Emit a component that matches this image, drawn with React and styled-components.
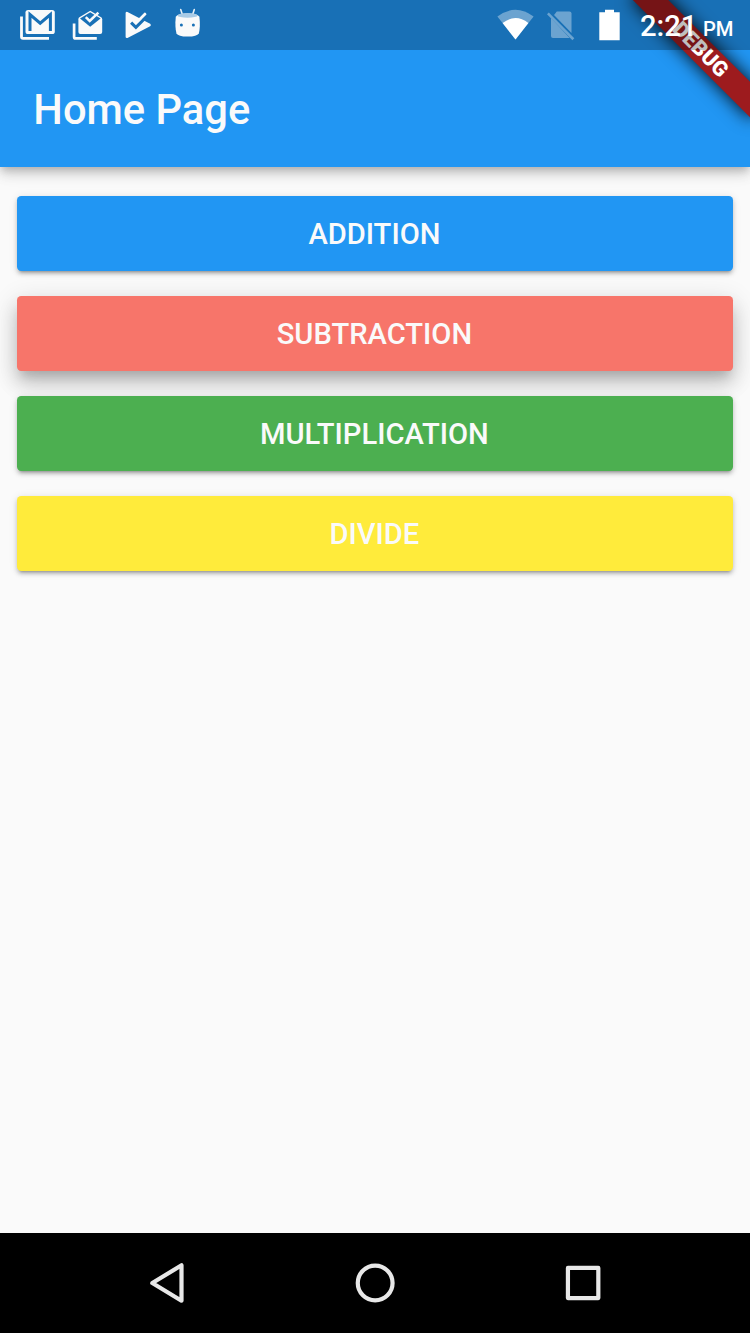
import React from 'react';
import styled, { createGlobalStyle } from 'styled-components';

const GlobalStyle = createGlobalStyle`
  * { box-sizing: border-box; }
  body { margin: 0; background: #fafafa; }
`;

const Screen = styled.div`
  position: relative;
  display: flex;
  flex-direction: column;
  width: 750px;
  height: 1333px;
  overflow: hidden;
  background: #fafafa;
  font-family: Roboto, 'Liberation Sans', sans-serif;
  color: #fafafa;
`;

const Header = styled.header`
  position: relative;
  flex: none;
  height: 166.67px;
  background: #2196f3;
  box-shadow: 0 4px 8px -2px rgba(0, 0, 0, 0.2), 0 8px 11px rgba(0, 0, 0, 0.11),
    0 2px 21px rgba(0, 0, 0, 0.09);
`;

const StatusBar = styled.div`
  position: relative;
  z-index: 2;
  display: flex;
  align-items: center;
  justify-content: space-between;
  height: 50px;
  padding: 0 17px 0 12px;
  background: rgba(0, 0, 0, 0.25);
`;

const StatusGroup = styled.div`
  display: flex;
  align-items: center;
`;

const StatusIcon = styled.svg`
  display: block;
  flex: none;
  width: ${(p) => p.$width || 50}px;
  height: 50px;
`;

const Clock = styled.div`
  width: 93px;
  font-size: 29.2px;
  font-weight: 500;
  line-height: 50px;
  padding-top: 4px;
  white-space: nowrap;
  color: #fff;
`;

const Meridiem = styled.span`
  margin-left: 5.5px;
  font-size: 20.2px;
`;

const Toolbar = styled.div`
  display: flex;
  align-items: center;
  height: 116.67px;
  padding: 4px 33.33px 0;
`;

const Title = styled.h1`
  margin: 0;
  font-size: 41.67px;
  font-weight: 500;
  line-height: 50px;
`;

const RibbonArea = styled.div`
  position: absolute;
  z-index: 1;
  top: 0;
  right: 0;
  width: 170px;
  height: 166.67px;
  overflow: hidden;
`;

const Ribbon = styled.div`
  position: absolute;
  top: 58.33px;
  left: 86.67px;
  width: 166.67px;
  height: 25px;
  transform: rotate(45deg);
  transform-origin: 83.33px -58.33px;
  background: #9d1b1e;
  box-shadow: 0 0 17px 1px rgba(0, 0, 0, 0.85);
  color: #fff;
  font-size: 21.25px;
  font-weight: 900;
  line-height: 24px;
  text-align: center;
`;

const Content = styled.main`
  display: flex;
  flex: 1;
  flex-direction: column;
  gap: 25px;
  padding: 29.17px 16.67px;
`;

const restingShadow = `0 4px 3px -3px rgba(0, 0, 0, 0.26), 0 3px 4px rgba(0, 0, 0, 0.18),
  0 1px 9px rgba(0, 0, 0, 0.1)`;
const pressedShadow = `0 9px 10px -4px rgba(0, 0, 0, 0.12), 0 13px 20px rgba(0, 0, 0, 0.16),
  0 6px 26px 2px rgba(0, 0, 0, 0.12)`;

const OperationButton = styled.button`
  flex: none;
  height: 75px;
  padding: 1px 1.2px 0 0;
  border: 0;
  border-radius: 4.17px;
  background: ${(p) => p.$color};
  box-shadow: ${(p) => (p.$pressed ? pressedShadow : restingShadow)};
  color: #fafafa;
  font-family: inherit;
  font-size: 29.17px;
  font-weight: 500;
  line-height: 34px;
  text-align: center;
`;

const NavigationBar = styled.nav`
  position: relative;
  display: flex;
  flex: none;
  align-items: center;
  justify-content: center;
  height: 100px;
  background: #000;
`;

const NavIcon = styled.svg`
  width: 208.33px;
  height: 100px;
  fill: none;
  stroke: #e8e8e8;
  stroke-width: 4.2;
  stroke-linejoin: round;
`;

const barBlue = '#1970b6';

function Notifications() {
  return (
    <StatusGroup>
      <StatusIcon viewBox="12.5 0 50 50">
        <path d="M22 16.5V36.8Q22 38.3 23.5 38.3H49.5" fill="none" stroke="#fafafa" strokeWidth="2.8" />
        <rect x="26" y="10" width="29.3" height="24" rx="2.6" fill="#fafafa" />
        <path d="M30.5 31V14.6L40.7 23.2L50.9 14.6V31" fill="none" stroke={barBlue} strokeWidth="3" />
      </StatusIcon>
      <StatusIcon viewBox="62.5 0 50 50">
        <path d="M74.6 23.5V36.9Q74.6 38.4 76.1 38.4H97.3" fill="none" stroke="#fafafa" strokeWidth="2.7" />
        <path d="M78.9 19.2Q78.9 18 79.9 17.3L90.7 10.7L101.6 17.3Q102.7 18 102.7 19.2V32Q102.7 34 100.7 34H80.9Q78.9 34 78.9 32Z" fill="#fafafa" />
        <path d="M80.5 18.4L90.7 12.3L101.1 18.4L90.7 26.8Z" fill={barBlue} />
        <path d="M86.3 17.2L90.2 21L98.9 12.6" fill="none" stroke="#fafafa" strokeWidth="2.5" />
      </StatusIcon>
      <StatusIcon viewBox="112.5 0 50 50">
        <path d="M127.4 13.2V36.8L150 25Z" fill="#fafafa" stroke="#fafafa" strokeWidth="2.6" strokeLinejoin="round" />
        <path d="M138.2 21.5L145.4 14.2" fill="none" stroke="#fafafa" strokeWidth="3" strokeLinecap="round" />
        <path d="M131.6 22.6L136.4 27.4L147.8 16" fill="none" stroke={barBlue} strokeWidth="3" />
      </StatusIcon>
      <StatusIcon viewBox="162.5 0 50 50">
        <path d="M181.2 9.6L183 15M194.8 9.6L193 15" stroke="#e8f1f8" strokeWidth="1.6" strokeLinecap="round" />
        <path d="M176.3 16.8C179 12.4 197 12.4 199.9 16.8Q201.1 27 199.3 33.5Q197.6 36.6 188.1 36.6Q178.6 36.6 177 33.5Q175.2 27 176.3 16.8Z" fill="#fafafa" />
        <ellipse cx="188.1" cy="15.4" rx="10" ry="2.3" fill="#a9cbe6" />
        <circle cx="181.9" cy="25" r="1.5" fill={barBlue} />
        <circle cx="193.9" cy="25" r="1.5" fill={barBlue} />
      </StatusIcon>
    </StatusGroup>
  );
}

function SystemStatus() {
  return (
    <StatusGroup>
      <StatusIcon viewBox="492 0 46 50" $width={46}>
        <path d="M497.4 16.5Q515.5 3.2 533.6 16.5L515.5 39.5Z" fill="#fff" opacity="0.36" />
        <path d="M502.6 23Q515.5 13 528.4 23L515.5 39.5Z" fill="#fff" />
      </StatusIcon>
      <StatusIcon viewBox="538 0 50 50">
        <g fill="#fff" opacity="0.36">
          <path d="M556.8 11.5H569.5Q571.5 11.5 571.5 13.5V33L554 15Z" />
          <path d="M551 18V36Q551 38 553 38H569.7Z" />
          <path d="M548.8 12.5L574.3 38.3L572.4 40.2L547 14.3Z" />
        </g>
      </StatusIcon>
      <StatusIcon viewBox="588 0 52 50" $width={52}>
        <path d="M605 9.7H614V12.3H619.7V40.2H599.3V12.3H605Z" fill="#fff" />
      </StatusIcon>
      <Clock>
        2:21<Meridiem>PM</Meridiem>
      </Clock>
    </StatusGroup>
  );
}

const operations = [
  { label: 'ADDITION', color: '#2196f3' },
  { label: 'SUBTRACTION', color: '#f7756a', pressed: true },
  { label: 'MULTIPLICATION', color: '#4caf50' },
  { label: 'DIVIDE', color: '#ffeb3b' },
];

export default function App() {
  return (
    <Screen>
      <GlobalStyle />
      <Header>
        <StatusBar>
          <Notifications />
          <SystemStatus />
        </StatusBar>
        <Toolbar>
          <Title>Home Page</Title>
        </Toolbar>
        <RibbonArea>
          <Ribbon>DEBUG</Ribbon>
        </RibbonArea>
      </Header>
      <Content>
        {operations.map(({ label, color, pressed }) => (
          <OperationButton key={label} $color={color} $pressed={pressed}>
            {label}
          </OperationButton>
        ))}
      </Content>
      <NavigationBar>
        <NavIcon viewBox="62.5 0 208.33 100">
          <path d="M151.8 50L181 32.3V67.7Z" />
        </NavIcon>
        <NavIcon viewBox="270.83 0 208.33 100">
          <circle cx="375" cy="50" r="17.4" />
        </NavIcon>
        <NavIcon viewBox="479.17 0 208.33 100">
          <rect x="568.1" y="34.9" width="30.4" height="30.2" />
        </NavIcon>
      </NavigationBar>
    </Screen>
  );
}
